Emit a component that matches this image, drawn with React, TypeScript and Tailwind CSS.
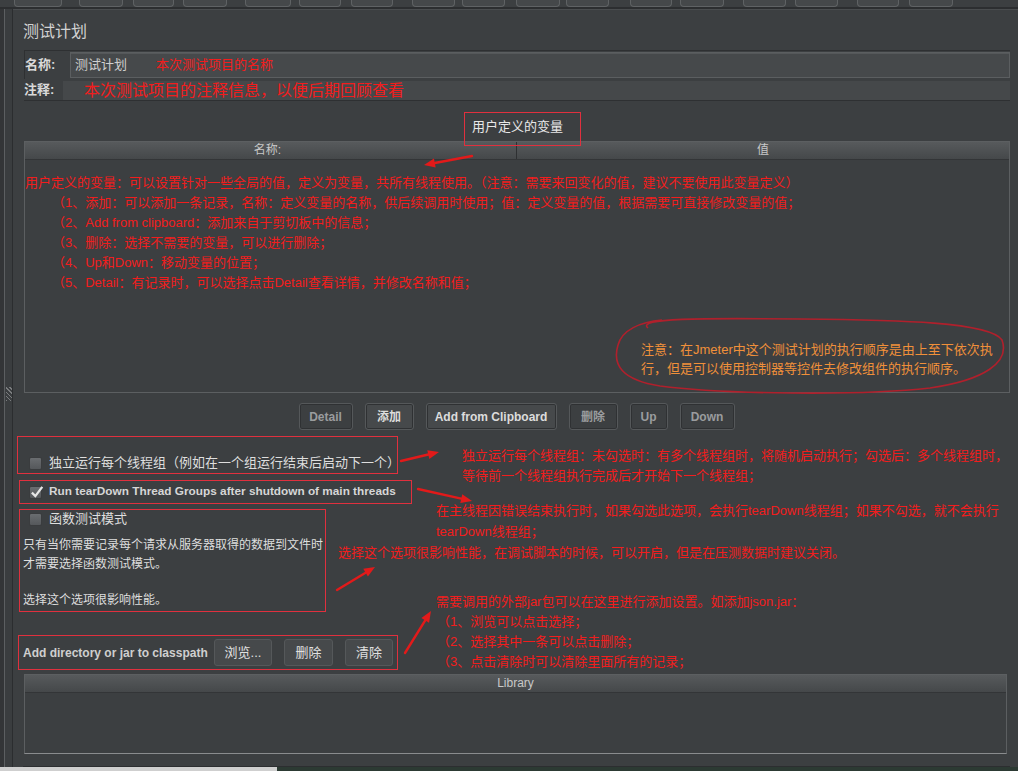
import React from "react";

const toolbarButtons = [
  "ml-[14px] w-[48px]",
  "ml-[17px] w-[44px]",
  "ml-[10px] w-[41px]",
  "ml-[9px] w-[44px]",
  "ml-[18px] w-[46px]",
  "ml-[8px] w-[42px]",
  "ml-[10px] w-[42px]",
  "ml-[19px] w-[43px]",
  "ml-[7px] w-[43px]",
  "ml-[11px] w-[44px]",
  "ml-[6px] w-[43px]",
  "ml-[21px] w-[42px]",
  "ml-[8px] w-[44px]",
  "ml-[19px] w-[43px]",
  "ml-[9px] w-[43px]",
  "ml-[19px] w-[42px]",
  "ml-[10px] w-[44px]",
];

type ArrowProps = { x1: number; y1: number; x2: number; y2: number };

// red hand-drawn pointer arrows of the annotations
const Arrow = ({ x1, y1, x2, y2 }: ArrowProps) => {
  const a = Math.atan2(y2 - y1, x2 - x1);
  const len = 11;
  const w = 4.5;
  const bx = x2 - Math.cos(a) * len;
  const by = y2 - Math.sin(a) * len;
  const px = -Math.sin(a) * w;
  const py = Math.cos(a) * w;
  return (
    <g>
      <line x1={x1} y1={y1} x2={bx} y2={by} stroke="#e21a1a" strokeWidth={2.4} strokeLinecap="round" />
      <polygon points={`${x2},${y2} ${bx + px},${by + py} ${bx - px},${by - py}`} fill="#e21a1a" />
    </g>
  );
};

const Checkbox = ({ checked }: { checked?: boolean }) => (
  <span className="relative inline-block w-[13px] h-[13px] shrink-0 bg-gradient-to-b from-[#6a6d70] to-[#55585b] border border-[#3a3c3e] rounded-[2px]">
    {checked && (
      <svg viewBox="0 0 13 13" className="absolute -left-[1px] -top-[3px] w-[15px] h-[15px]">
        <path d="M2.5 7.5 L5.5 10.5 L11.5 2.5" fill="none" stroke="#e6e6e6" strokeWidth={2} />
      </svg>
    )}
  </span>
);

const Btn = ({ label, active, w }: { label: string; active?: boolean; w: string }) => (
  <div
    className={`${w} h-[27px] flex items-center justify-center rounded-[3px] border border-[#55585a] shadow-[inset_0_0_0_1px_#2f3133] text-[12px] font-bold ${
      active ? "bg-[#46494b] text-[#dcdcdc]" : "bg-[#3c3f41] text-[#9a9c9e]"
    }`}
  >
    {label}
  </div>
);

const Red = "text-[#f21d1d]";

export default function App() {
  return (
    <div className="relative w-[1018px] h-[771px] overflow-hidden bg-[#3c3f41] font-['Liberation_Sans','Noto_Sans_CJK_SC',sans-serif] text-[#cfcfcf]">
      {/* Toolbar remnants */}
      <div className="h-[9px] flex border-b-[2px] border-[#2c2e30]">
        {toolbarButtons.map((c, i) => (
          <div key={i} className={`${c} h-[7px] rounded-b-[4px] bg-[#45484a] border border-t-0 border-[#5f6264]`} />
        ))}
      </div>

      <div className="flex h-[758px]">
        {/* Left splitter strip */}
        <div className="w-[13px] flex bg-[#3a3d3f]">
          <div className="w-[4px] bg-[#333537]" />
          <div className="w-[1px] bg-[#5c5f61]" />
          <div className="flex-1 flex flex-col pt-[378px] pl-[1px]">
            <div className="w-[6px] h-[14px] bg-[repeating-linear-gradient(45deg,#7a7c7e_0_1px,transparent_1px_3px)]" />
          </div>
          <div className="w-[1px] bg-[#2b2d2f]" />
        </div>

        {/* Test plan panel */}
        <div className="flex-1 flex flex-col border-t border-[#4a4d4f] pl-[10px] pr-[8px]">
          <div className="pt-[12px] h-[32px] text-[16px] leading-[20px] text-[#d2d2d2]">测试计划</div>

          {/* Name */}
          <div className="mt-[8px] ml-[1px] h-[29px] flex border-t border-l border-[#2e3032]">
            <div className="w-[45px] flex items-center text-[13px] font-bold text-[#dadada]">名称:</div>
            <div className="flex-1 mt-[1px] h-[26px] flex items-center bg-[#46494b] border border-[#5b5e60] shadow-[inset_0_1px_0_#55585a] pl-[4px] text-[13px] text-[#cfcfcf]">
              测试计划
              <span className={`ml-[29px] ${Red} text-[13px]`}>本次测试项目的名称</span>
            </div>
          </div>

          {/* Comment */}
          <div className="ml-[1px] h-[22px] flex border-b border-[#2e3032]">
            <div className="w-[39px] flex items-center text-[13px] font-bold text-[#dadada]">注释:</div>
            <div className={`flex-1 mt-[2px] flex items-center bg-[#45484a] pl-[21px] ${Red} text-[16px] leading-[18px]`}>
              本次测试项目的注释信息，以便后期回顾查看
            </div>
          </div>

          {/* User defined variables caption */}
          <div className="relative z-10 mt-[11px] -mb-[5px] ml-[441px] w-[117px] h-[34px] border border-[#e0303e] pl-[7px] pt-[6px] text-[13px] leading-[16px] text-[#e8e8e8]">
            用户定义的变量
          </div>

          {/* Variables table */}
          <div className="ml-[1px] h-[252px] flex flex-col border border-[#5c5f61]">
            <div className="h-[18px] grid grid-cols-2 bg-gradient-to-b from-[#575a5c] to-[#45484a] border-b border-[#333537] text-[12px] leading-[17px] text-[#c8c8c8]">
              <div className="text-center border-r border-[#2e3032] pr-[6px]">名称:</div>
              <div className="text-center">值</div>
            </div>
            <div className={`pt-[13px] text-[13px] leading-[20px] ${Red}`}>
              <div>用户定义的变量：可以设置针对一些全局的值，定义为变量，共所有线程使用。（注意：需要来回变化的值，建议不要使用此变量定义）</div>
              <div className="pl-[27px]">
                <div>（1、添加：可以添加一条记录，名称：定义变量的名称，供后续调用时使用；值：定义变量的值，根据需要可直接修改变量的值；</div>
                <div>（2、Add from clipboard：添加来自于剪切板中的信息；</div>
                <div>（3、删除：选择不需要的变量，可以进行删除；</div>
                <div>（4、Up和Down：移动变量的位置；</div>
                <div>（5、Detail：有记录时，可以选择点击Detail查看详情，并修改名称和值；</div>
              </div>
            </div>
          </div>

          {/* Table buttons */}
          <div className="mt-[10px] flex justify-center gap-[12px]">
            <Btn label="Detail" w="w-[54px]" />
            <Btn label="添加" w="w-[49px]" active />
            <Btn label="Add from Clipboard" w="w-[131px]" active />
            <Btn label="删除" w="w-[49px]" />
            <Btn label="Up" w="w-[38px]" />
            <Btn label="Down" w="w-[55px]" />
          </div>

          {/* Options */}
          <div className="mt-[6px] -ml-[6px] w-[381px] h-[38px] border border-[#e0303e] pl-[11px] pt-[16px] flex items-center gap-[7px] text-[13px] leading-[18px] text-[#dedede]">
            <Checkbox />
            <span>独立运行每个线程组（例如在一个组运行结束后启动下一个）</span>
          </div>
          <div className="mt-[6px] -ml-[4px] w-[393px] h-[24px] border border-[#e0303e] pl-[9px] flex items-center gap-[7px] text-[11.8px] font-bold text-[#d6d6d6]">
            <Checkbox checked />
            <span>Run tearDown Thread Groups after shutdown of main threads</span>
          </div>
          <div className="mt-[5px] -ml-[4px] w-[307px] h-[103px] border border-[#e0303e] pl-[3px] text-[#dedede]">
            <div className="h-[18px] pl-[6px] flex items-center gap-[7px] text-[13px]">
              <Checkbox />
              <span>函数测试模式</span>
            </div>
            <div className="pt-[8px] text-[12px] leading-[19px]">
              <div>只有当你需要记录每个请求从服务器取得的数据到文件时</div>
              <div>才需要选择函数测试模式。</div>
              <div className="h-[17px]" />
              <div>选择这个选项很影响性能。</div>
            </div>
          </div>

          {/* Classpath */}
          <div className="mt-[23px] -ml-[5px] w-[380px] h-[35px] border border-[#e0303e] pl-[4px] flex items-center">
            <span className="text-[12px] font-bold text-[#cfcfcf]">Add directory or jar to classpath</span>
            <div className="ml-auto mr-[4px] flex gap-[12px]">
              <div className="w-[58px] h-[27px] flex items-center justify-center rounded-[3px] bg-[#46494b] border border-[#55585a] text-[13px] text-[#e0e0e0]">浏览...</div>
              <div className="w-[49px] h-[27px] flex items-center justify-center rounded-[3px] bg-[#46494b] border border-[#55585a] text-[13px] text-[#e0e0e0]">删除</div>
              <div className="w-[48px] h-[27px] flex items-center justify-center rounded-[3px] bg-[#46494b] border border-[#55585a] text-[13px] text-[#e0e0e0]">清除</div>
            </div>
          </div>

          {/* Library table */}
          <div className="mt-[4px] ml-[1px] mr-[3px] h-[80px] flex flex-col border border-[#5c5f61] border-b-[#8a8c8e]">
            <div className="h-[18px] bg-gradient-to-b from-[#575a5c] to-[#45484a] border-b border-[#333537] text-center text-[12px] leading-[17px] text-[#c8c8c8]">
              Library
            </div>
            <div className="flex-1" />
          </div>
          <div className="flex-1 border-b border-[#2c2e30]" />
        </div>
      </div>

      {/* Bottom status strip */}
      <div className="h-[4px] flex">
        <div className="w-[277px] bg-[#cfcfcf]" />
        <div className="flex-1 bg-[#2c3a33]" />
      </div>

      {/* Annotation overlay */}
      <svg className="absolute inset-0 pointer-events-none" width={1018} height={771}>
        <Arrow x1={472} y1={156} x2={424} y2={165} />
        <Arrow x1={401} y1={461} x2={439} y2={452} />
        <Arrow x1={418} y1={489} x2={472} y2={501} />
        <Arrow x1={337} y1={590} x2={375} y2={567} />
        <Arrow x1={405} y1={653} x2={431} y2={611} />
        <path
          d="M648 328 C636 318 700 318 800 319 C900 320 990 322 1002 340 C1010 362 985 380 930 388 C860 396 720 394 660 386 C622 380 612 365 618 345 C622 330 640 322 662 320"
          fill="none"
          stroke="#b0202c"
          strokeWidth={1.6}
        />
      </svg>

      <div className="absolute left-[641px] top-[340px] text-[13px] leading-[19px] text-[#f0903a]">
        <div>注意：在Jmeter中这个测试计划的执行顺序是由上至下依次执</div>
        <div>行，但是可以使用控制器等控件去修改组件的执行顺序。</div>
      </div>

      <div className={`absolute left-[462px] top-[446px] text-[13px] leading-[20px] ${Red}`}>
        <div>独立运行每个线程组：未勾选时：有多个线程组时，将随机启动执行；勾选后：多个线程组时，</div>
        <div>等待前一个线程组执行完成后才开始下一个线程组；</div>
      </div>
      <div className={`absolute left-[436px] top-[500px] text-[13px] leading-[21px] ${Red}`}>
        <div>在主线程因错误结束执行时，如果勾选此选项，会执行tearDown线程组；如果不勾选，就不会执行</div>
        <div>tearDown线程组；</div>
      </div>
      <div className={`absolute left-[338px] top-[543px] text-[13px] leading-[20px] ${Red}`}>
        选择这个选项很影响性能，在调试脚本的时候，可以开启，但是在压测数据时建议关闭。
      </div>
      <div className={`absolute left-[436px] top-[592px] text-[13px] leading-[20px] ${Red}`}>
        <div>需要调用的外部jar包可以在这里进行添加设置。如添加json.jar：</div>
        <div className="pl-[1px]">
          <div>（1、浏览可以点击选择；</div>
          <div>（2、选择其中一条可以点击删除；</div>
          <div>（3、点击清除时可以清除里面所有的记录；</div>
        </div>
      </div>
    </div>
  );
}
